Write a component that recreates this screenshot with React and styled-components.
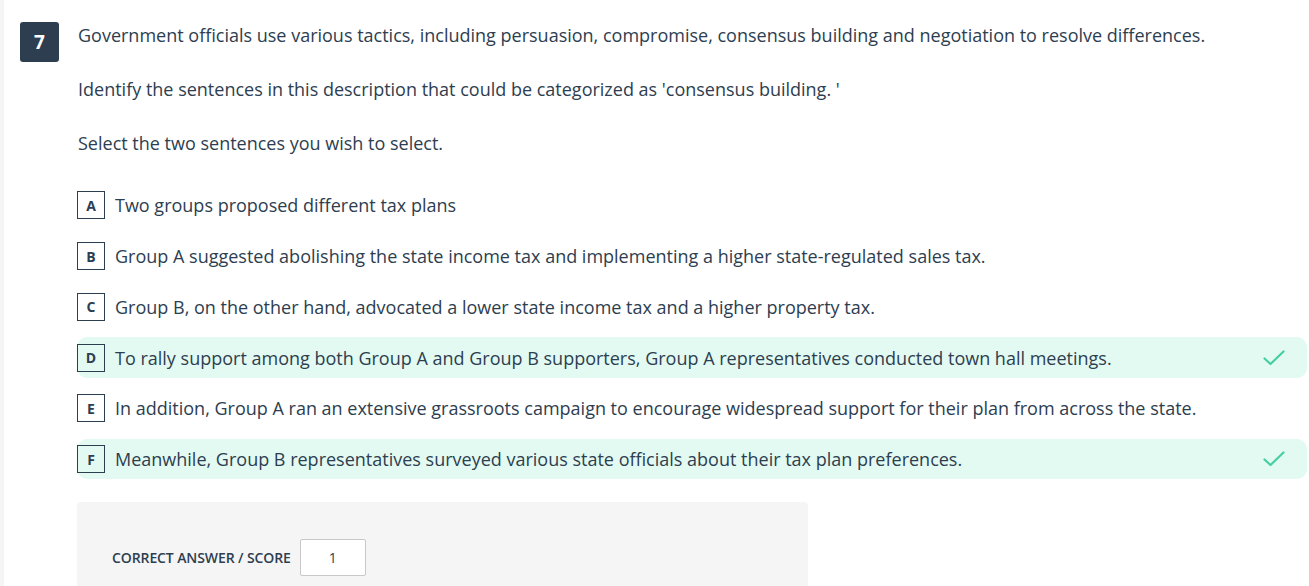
import styled, { createGlobalStyle } from "styled-components";

const GlobalStyle = createGlobalStyle`
  body {
    margin: 0;
    background: #ffffff;
    font-family: "Open Sans", "Noto Sans", sans-serif;
    color: #2d3e50;
  }
`;

const options = [
  { key: "A", text: "Two groups proposed different tax plans" },
  {
    key: "B",
    text: "Group A suggested abolishing the state income tax and implementing a higher state-regulated sales tax.",
  },
  {
    key: "C",
    text: "Group B, on the other hand, advocated a lower state income tax and a higher property tax.",
  },
  {
    key: "D",
    text: "To rally support among both Group A and Group B supporters, Group A representatives conducted town hall meetings.",
    correct: true,
  },
  {
    key: "E",
    text: "In addition, Group A ran an extensive grassroots campaign to encourage widespread support for their plan from across the state.",
  },
  {
    key: "F",
    text: "Meanwhile, Group B representatives surveyed various state officials about their tax plan preferences.",
    correct: true,
  },
];

const CheckIcon = () => (
  <svg width="22" height="16" viewBox="0 0 22 16" fill="none">
    <path
      d="M1.5 8.5 L7.5 14 L20.5 1.5"
      stroke="#45cfa0"
      strokeWidth="2.2"
      strokeLinecap="round"
      strokeLinejoin="round"
    />
  </svg>
);

const App = () => {
  return (
    <>
      <GlobalStyle />
      <Page>
        <Question>
          <Badge>7</Badge>
          <Body>
            <Prompt>
              Government officials use various tactics, including persuasion, compromise,
              consensus building and negotiation to resolve differences.
            </Prompt>
            <Prompt>
              Identify the sentences in this description that could be categorized as
              'consensus building. '
            </Prompt>
            <Prompt>Select the two sentences you wish to select.</Prompt>
            <OptionList>
              {options.map((o) => (
                <Option key={o.key} $correct={o.correct}>
                  <Letter>{o.key}</Letter>
                  <OptionText>{o.text}</OptionText>
                  {o.correct && (
                    <Mark>
                      <CheckIcon />
                    </Mark>
                  )}
                </Option>
              ))}
            </OptionList>
            <ScorePanel>
              <ScoreLabel>Correct answer / score</ScoreLabel>
              <ScoreBox>1</ScoreBox>
            </ScorePanel>
          </Body>
        </Question>
      </Page>
    </>
  );
};

const Page = styled.div`
  border-left: 4px solid #f5f5f5;
  height: 586px;
  overflow: hidden;
  box-sizing: border-box;
`;

const Question = styled.div`
  display: flex;
  align-items: flex-start;
  padding: 22px 2px 0 16px;
`;

const Badge = styled.div`
  width: 39px;
  height: 40px;
  flex-shrink: 0;
  border-radius: 3px;
  background: #2d3e50;
  color: #ffffff;
  font-weight: 700;
  font-size: 19px;
  display: flex;
  align-items: center;
  justify-content: center;
`;

const Body = styled.div`
  flex: 1;
  margin-left: 18px;
`;

const Prompt = styled.p`
  margin: 0 0 28px 1px;
  font-size: 18px;
  line-height: 26px;
`;

const OptionList = styled.div`
  display: flex;
  flex-direction: column;
  gap: 10.3px;
  margin-top: 29px;
`;

const Option = styled.div`
  display: flex;
  align-items: center;
  height: 40.5px;
  border-radius: 10px;
  background: ${(p) => (p.$correct ? "#e3faf2" : "transparent")};
`;

const Letter = styled.div`
  width: 26px;
  height: 26px;
  flex-shrink: 0;
  border: 1px solid #2d3e50;
  display: flex;
  align-items: center;
  justify-content: center;
  font-size: 14px;
  font-weight: 700;
`;

const OptionText = styled.div`
  flex: 1;
  margin-left: 10px;
  font-size: 18px;
  line-height: 24px;
`;

const Mark = styled.div`
  display: flex;
  margin-right: 22px;
`;

const ScorePanel = styled.div`
  margin-top: 23px;
  width: 731px;
  height: 110px;
  background: #f5f5f5;
  border-radius: 4px;
  display: flex;
  align-items: flex-start;
  padding: 37px 0 0 35px;
  box-sizing: border-box;
`;

const ScoreLabel = styled.div`
  text-transform: uppercase;
  font-size: 14px;
  font-weight: 600;
  height: 37px;
  line-height: 37px;
  letter-spacing: -0.1px;
`;

const ScoreBox = styled.div`
  margin-left: 9px;
  width: 64px;
  height: 35px;
  border: 1px solid #c8c8c8;
  border-radius: 2px;
  background: #ffffff;
  display: flex;
  align-items: center;
  justify-content: center;
  font-size: 14px;
`;

export default App;
